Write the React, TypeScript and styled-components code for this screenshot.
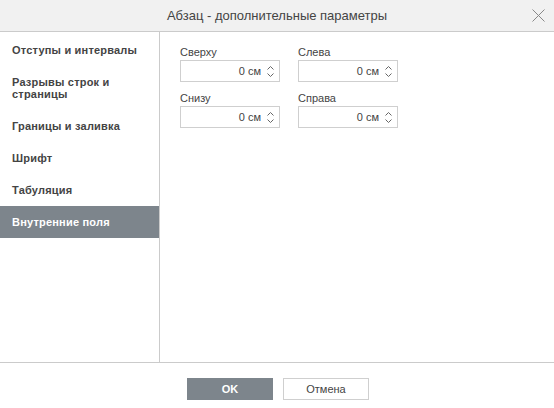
import React from "react";
import styled, { createGlobalStyle } from "styled-components";

const Global = createGlobalStyle`
  html, body { margin: 0; padding: 0; background: #fff; }
  body { font-family: "Liberation Sans", Arial, sans-serif; color: #444; }
  * { box-sizing: border-box; }
`;

const Dialog = styled.div`
  width: 554px;
  height: 408px;
  display: flex;
  flex-direction: column;
  background: #fff;
`;

const Header = styled.div`
  height: 32px;
  flex: none;
  background: #f1f1f1;
  border-bottom: 1px solid #cbcbcb;
  display: flex;
  align-items: center;
  justify-content: center;
  position: relative;
`;

const Title = styled.div`
  font-size: 13px;
  color: #444;
  line-height: 16px;
`;

const Close = styled.div`
  position: absolute;
  right: 9px;
  top: 8px;
  width: 14px;
  height: 14px;
  display: flex;
  align-items: center;
  justify-content: center;
`;

const Body = styled.div`
  flex: 1;
  display: flex;
  border-bottom: 1px solid #cbcbcb;
`;

const Menu = styled.div`
  width: 160px;
  flex: none;
  border-right: 1px solid #cbcbcb;
  padding-top: 2px;
  display: flex;
  flex-direction: column;
`;

const MenuItem = styled.div<{ $active?: boolean }>`
  padding: 10px 12px;
  font-size: 11px;
  line-height: 12px;
  font-weight: bold;
  letter-spacing: 0.2px;
  color: ${(p) => (p.$active ? "#fff" : "#444")};
  background: ${(p) => (p.$active ? "#7d858c" : "transparent")};
`;

const Content = styled.div`
  flex: 1;
  padding: 13px 0 0 20px;
`;

const Grid = styled.div`
  display: grid;
  grid-template-columns: 100px 100px;
  column-gap: 18px;
  row-gap: 9px;
`;

const Field = styled.div`
  display: flex;
  flex-direction: column;
`;

const Label = styled.div`
  font-size: 11px;
  line-height: 14px;
  margin-bottom: 1px;
  color: #444;
`;

const Spinner = styled.div`
  height: 22px;
  border: 1px solid #cfcfcf;
  display: flex;
  align-items: center;
  background: #fff;
`;

const Value = styled.div`
  flex: 1;
  text-align: right;
  font-size: 11px;
  color: #444;
  padding-right: 1px;
`;

const Arrows = styled.div`
  width: 17px;
  height: 100%;
  display: flex;
  flex-direction: column;
  align-items: center;
  justify-content: center;
  gap: 3px;
`;

const Footer = styled.div`
  height: 45px;
  flex: none;
  display: flex;
  justify-content: center;
  align-items: flex-start;
  padding-top: 15px;
  padding-left: 2px;
  gap: 10px;
`;

const Button = styled.div<{ $primary?: boolean }>`
  width: 86px;
  height: 22px;
  display: flex;
  align-items: center;
  justify-content: center;
  font-size: 11px;
  font-weight: ${(p) => (p.$primary ? "bold" : "normal")};
  color: ${(p) => (p.$primary ? "#fff" : "#444")};
  background: ${(p) => (p.$primary ? "#7d858c" : "#fff")};
  border: 1px solid ${(p) => (p.$primary ? "#7d858c" : "#cfcfcf")};
`;

const Chevron = ({ up }: { up?: boolean }) => (
  <svg width="7" height="4" viewBox="0 0 7 4">
    <path
      d={up ? "M0.5 3.5 L3.5 0.5 L6.5 3.5" : "M0.5 0.5 L3.5 3.5 L6.5 0.5"}
      fill="none"
      stroke="#666"
      strokeWidth="1"
    />
  </svg>
);

const SpinField = ({ label }: { label: string }) => (
  <Field>
    <Label>{label}</Label>
    <Spinner>
      <Value>0 см</Value>
      <Arrows>
        <Chevron up />
        <Chevron />
      </Arrows>
    </Spinner>
  </Field>
);

export default function App() {
  const items = [
    "Отступы и интервалы",
    "Разрывы строк и страницы",
    "Границы и заливка",
    "Шрифт",
    "Табуляция",
    "Внутренние поля",
  ];
  return (
    <>
      <Global />
      <Dialog>
        <Header>
          <Title>Абзац - дополнительные параметры</Title>
          <Close>
            <svg width="13" height="13" viewBox="0 0 13 13">
              <path d="M0.5 0.5 L12.5 12.5 M12.5 0.5 L0.5 12.5" stroke="#888" strokeWidth="1" />
            </svg>
          </Close>
        </Header>
        <Body>
          <Menu>
            {items.map((t, i) => (
              <MenuItem key={t} $active={i === items.length - 1}>
                {t}
              </MenuItem>
            ))}
          </Menu>
          <Content>
            <Grid>
              <SpinField label="Сверху" />
              <SpinField label="Слева" />
              <SpinField label="Снизу" />
              <SpinField label="Справа" />
            </Grid>
          </Content>
        </Body>
        <Footer>
          <Button $primary>OK</Button>
          <Button>Отмена</Button>
        </Footer>
      </Dialog>
    </>
  );
}
